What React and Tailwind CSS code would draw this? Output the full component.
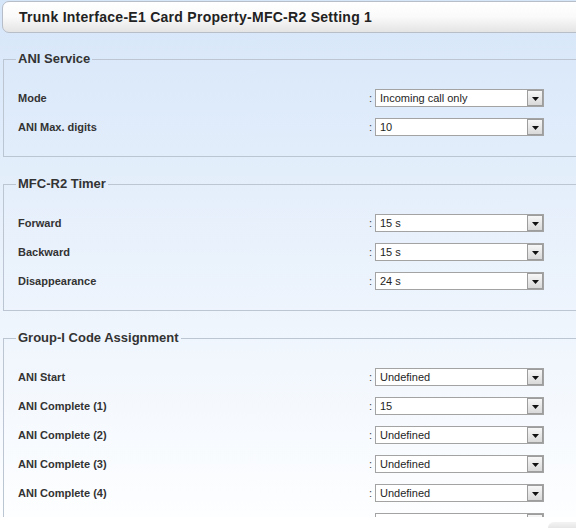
import React from "react";

const sections = [
  {
    title: "ANI Service",
    rows: [
      { label: "Mode", value: "Incoming call only" },
      { label: "ANI Max. digits", value: "10" },
    ],
  },
  {
    title: "MFC-R2 Timer",
    rows: [
      { label: "Forward", value: "15 s" },
      { label: "Backward", value: "15 s" },
      { label: "Disappearance", value: "24 s" },
    ],
  },
  {
    title: "Group-I Code Assignment",
    rows: [
      { label: "ANI Start", value: "Undefined" },
      { label: "ANI Complete (1)", value: "15" },
      { label: "ANI Complete (2)", value: "Undefined" },
      { label: "ANI Complete (3)", value: "Undefined" },
      { label: "ANI Complete (4)", value: "Undefined" },
      { label: "", value: "" },
    ],
  },
];

function Select({ value }) {
  return (
    <div className="w-[169px] h-[18px] border border-[#a3a3a3] bg-white flex items-stretch">
      <span className="flex-1 pl-[4px] text-[11px] leading-[16px] text-[#1e1e1e] whitespace-nowrap overflow-hidden">
        {value}
      </span>
      <span className="w-[16px] border border-[#9d9d9d] bg-gradient-to-b from-[#f7f7f7] to-[#d9d9d9] flex items-end justify-center pb-[4px]">
        <svg width="7" height="4" viewBox="0 0 7 4">
          <path d="M0 0 H7 L3.5 4 Z" fill="#111" />
        </svg>
      </span>
    </div>
  );
}

function Section({ title, rows, first }) {
  return (
    <fieldset
      className={`ml-[1px] w-[640px] border border-[#bcc5d2] pl-[12px] pb-[20px] ${
        first ? "mt-[18px]" : "mt-[19px]"
      }`}
    >
      <legend className="px-[2px] text-[13px] leading-[16px] font-bold text-[#333]">
        {title}
      </legend>
      <div className="mt-[22px] flex flex-col gap-[11px]">
        {rows.map((r, i) => (
          <div key={i} className="flex items-center h-[18px]">
            <span className="w-[353px] pl-[2px] text-[11px] font-bold text-[#333]">
              {r.label}
            </span>
            <span className="w-[6px] text-[11px] text-[#444]">{r.label ? ":" : ""}</span>
            <Select value={r.value} />
          </div>
        ))}
      </div>
    </fieldset>
  );
}

export default function App() {
  return (
    <div className="w-[576px] h-[528px] overflow-hidden bg-white font-['Liberation_Sans',Arial,sans-serif]">
      <div className="h-[517px] overflow-hidden pt-[1px] pl-[2px] bg-gradient-to-b from-[#d6e6f9] via-[#eaf2fc] to-[#fdfeff]">
        {/* Title bar */}
        <div className="w-[640px] h-[32px] rounded-l-[7px] border border-[#b8bec7] bg-gradient-to-b from-white via-[#fafafa] to-[#e4e4e4] flex items-center pl-[16px]">
          <span className="text-[14px] font-bold tracking-[0.27px] text-[#222]">
            Trunk Interface-E1 Card Property-MFC-R2 Setting 1
          </span>
        </div>

        {sections.map((s, i) => (
          <Section key={s.title} title={s.title} rows={s.rows} first={i === 0} />
        ))}
      </div>
      <div className="flex justify-end mt-[5px]">
        <div className="w-[28px] h-[6px] rounded-tl-[8px] bg-gradient-to-b from-[#f4f4f4] to-[#e6e6e6]" />
      </div>
    </div>
  );
}
